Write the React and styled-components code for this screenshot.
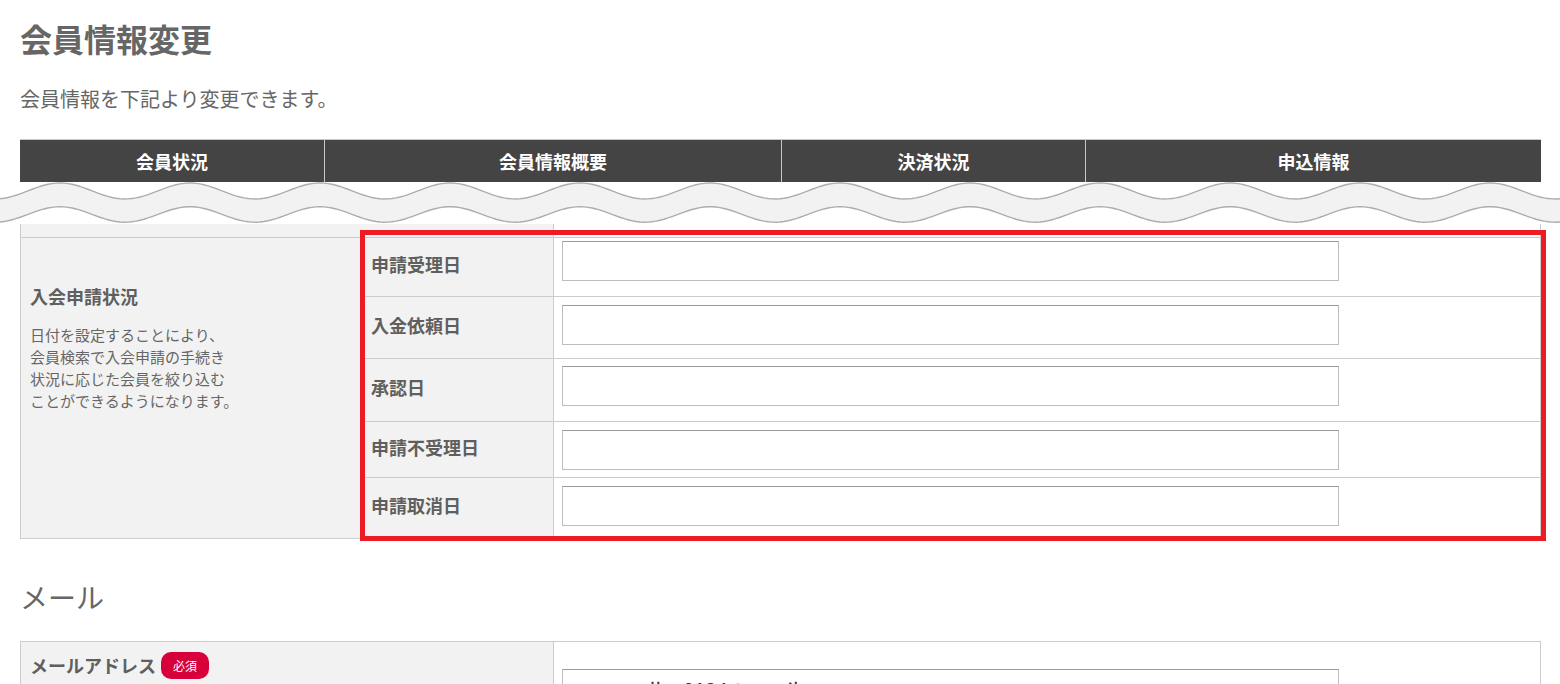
import React from 'react';
import styled, { createGlobalStyle } from 'styled-components';

const FONT = `"Noto Sans CJK JP", "Noto Sans", sans-serif`;

const Global = createGlobalStyle`
  html, body { margin: 0; padding: 0; background: #fff; }
  body { font-family: ${FONT}; color: #666; }
  *, *::before, *::after { box-sizing: border-box; }
`;

const Page = styled.div`
  width: 1560px;
  padding: 0 19px 40px 20px;
`;

const Title = styled.h1`
  margin: 0;
  padding-top: 16px;
  font-size: 32px;
  line-height: 44px;
  font-weight: 700;
  color: #666;
`;

const Lead = styled.p`
  margin: 24px 0 0;
  font-size: 20px;
  line-height: 30px;
  color: #666;
`;

const Tabs = styled.div`
  margin-top: 25px;
  display: grid;
  grid-template-columns: 304px 457px 304px 1fr;
  height: 43px;
  background: #444;
  border-top: 1px solid #c8c8c8;
`;

const Tab = styled.div`
  display: flex;
  align-items: center;
  justify-content: center;
  color: #fff;
  font-size: 18px;
  font-weight: 700;
  border-left: ${(p) => (p.$first ? 'none' : '1px solid #c8c8c8')};
`;

const WaveBox = styled.div`
  margin: 0 -19px 0 -20px;
  height: 42px;
  svg { display: block; }
`;

const Frame = styled.div`
  border-left: 1px solid #ccc;
  border-right: 1px solid #ccc;
  border-bottom: 1px solid #ccc;
`;

const Sliver = styled.div`
  display: grid;
  grid-template-columns: 533px 1fr;
  height: 14px;
  border-bottom: 1px solid #ccc;
`;

const SliverHead = styled.div`
  background: #f2f2f2;
  border-right: 1px solid #ccc;
`;

const StatusBlock = styled.div`
  display: flex;
`;

const GroupCell = styled.div`
  width: 339px;
  flex: none;
  background: #f2f2f2;
  padding: 45px 9px 0;
`;

const GroupTitle = styled.div`
  font-size: 18px;
  line-height: 26px;
  font-weight: 700;
  color: #5f5f5f;
`;

const GroupDesc = styled.p`
  margin: 15px 0 0;
  font-size: 15px;
  line-height: 22px;
  color: #666;
`;

const SubTable = styled.div`
  flex: 1;
  position: relative;
  border-left: 1px solid #ccc;
`;

const SubRow = styled.div`
  display: grid;
  grid-template-columns: 193px 1fr;
  height: ${(p) => p.$h}px;
  border-bottom: ${(p) => (p.$last ? 'none' : '1px solid #ccc')};
`;

const SubLabel = styled.div`
  display: flex;
  align-items: center;
  padding: 0 0 6px 10px;
  background: #f2f2f2;
  border-right: 1px solid #ccc;
  font-size: 18px;
  font-weight: 700;
  color: #5f5f5f;
`;

const InputCell = styled.div`
  padding: ${(p) => p.$top}px 8px 0;
  background: #fff;
`;

const Field = styled.input`
  display: block;
  width: 777px;
  height: 40px;
  margin: 0;
  padding: 0 12px;
  border: 1px solid #bdbdbd;
  border-top-color: #9a9a9a;
  border-radius: 0;
  background: #fff;
  font-family: ${FONT};
  font-size: 20px;
  color: #333;
  outline: none;
`;

const Highlight = styled.div`
  position: absolute;
  left: -1px;
  top: -8px;
  right: -6px;
  bottom: -3px;
  border: 5px solid #ed1c24;
  pointer-events: none;
`;

const SectionTitle = styled.h2`
  margin: 38px 0 0;
  font-size: 28px;
  line-height: 40px;
  font-weight: 400;
  color: #666;
`;

const MailTable = styled.div`
  margin-top: 24px;
  display: grid;
  grid-template-columns: 533px 1fr;
  border: 1px solid #ccc;
`;

const MailHead = styled.div`
  background: #f2f2f2;
  border-right: 1px solid #ccc;
  padding: 10px 9px 40px;
`;

const LabelLine = styled.div`
  display: flex;
  align-items: center;
  gap: 5px;
  font-size: 18px;
  line-height: 27px;
  font-weight: 700;
  color: #5f5f5f;
`;

const Required = styled.span`
  display: inline-flex;
  align-items: center;
  justify-content: center;
  width: 48px;
  height: 27px;
  border-radius: 10px;
  background: #d7003a;
  color: #fff;
  font-size: 12px;
  font-weight: 400;
`;

const MailCell = styled.div`
  padding: 27px 8px 30px;
`;

function Wave() {
  const W = 1560;
  const top = [];
  const bot = [];
  for (let x = 0; x <= W; x += 4) {
    const t = (2 * Math.PI * (x - 60)) / 130;
    top.push([x, 9 - 8 * Math.cos(t)]);
    bot.push([x, 32.5 - 7.75 * Math.cos(t)]);
  }
  const line = (pts) => pts.map((p, i) => `${i ? 'L' : 'M'}${p[0]},${p[1].toFixed(2)}`).join(' ');
  const fill = `${line(top)} ${bot
    .slice()
    .reverse()
    .map((p) => `L${p[0]},${p[1].toFixed(2)}`)
    .join(' ')} Z`;
  return (
    <WaveBox>
      <svg width={W} height="42" viewBox={`0 0 ${W} 42`}>
        <path d={fill} fill="#f2f2f2" />
        <path d={line(top)} fill="none" stroke="#adadad" strokeWidth="1.4" />
        <path d={line(bot)} fill="none" stroke="#adadad" strokeWidth="1.4" />
      </svg>
    </WaveBox>
  );
}

const tabs = ['会員状況', '会員情報概要', '決済状況', '申込情報'];

const rows = [
  { label: '申請受理日', h: 59, top: 3 },
  { label: '入金依頼日', h: 62, top: 8 },
  { label: '承認日', h: 63, top: 7 },
  { label: '申請不受理日', h: 56, top: 8 },
  { label: '申請取消日', h: 60, top: 8 },
];

export default function App() {
  return (
    <>
      <Global />
      <Page>
        <Title>会員情報変更</Title>
        <Lead>会員情報を下記より変更できます。</Lead>
        <Tabs>
          {tabs.map((t, i) => (
            <Tab key={t} $first={i === 0}>
              {t}
            </Tab>
          ))}
        </Tabs>
        <Wave />
        <Frame>
          <Sliver>
            <SliverHead />
            <div />
          </Sliver>
          <StatusBlock>
            <GroupCell>
              <GroupTitle>入会申請状況</GroupTitle>
              <GroupDesc>
                日付を設定することにより、
                <br />
                会員検索で入会申請の手続き
                <br />
                状況に応じた会員を絞り込む
                <br />
                ことができるようになります。
              </GroupDesc>
            </GroupCell>
            <SubTable>
              {rows.map((r, i) => (
                <SubRow key={r.label} $h={r.h} $last={i === rows.length - 1}>
                  <SubLabel>{r.label}</SubLabel>
                  <InputCell $top={r.top}>
                    <Field type="text" />
                  </InputCell>
                </SubRow>
              ))}
              <Highlight />
            </SubTable>
          </StatusBlock>
        </Frame>
        <SectionTitle>メール</SectionTitle>
        <MailTable>
          <MailHead>
            <LabelLine>
              メールアドレス<Required>必須</Required>
            </LabelLine>
          </MailHead>
          <MailCell>
            <Field type="text" defaultValue="sunamall.st0134@gmail.com" />
          </MailCell>
        </MailTable>
      </Page>
    </>
  );
}
